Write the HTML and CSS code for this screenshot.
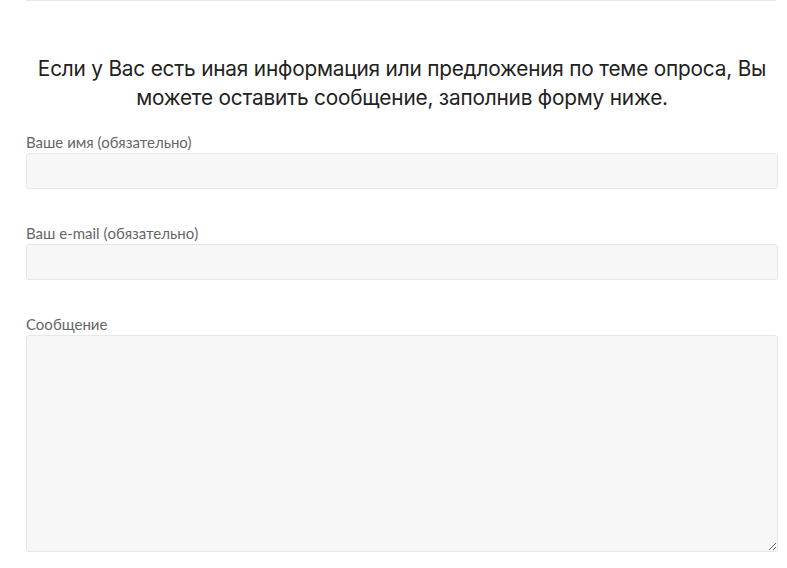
FILE: index.html
```html
<!DOCTYPE html>
<html lang="ru">
<head>
<meta charset="utf-8">
<link rel="stylesheet" href="styles.css">
</head>
<body>
<div class="page">
  <div class="rule"></div>
  <h2 class="intro">Если у Вас есть иная информация или предложения по теме опроса, Вы можете оставить сообщение, заполнив форму ниже.</h2>
  <form class="form">
    <label class="field">
      <span class="label">Ваше имя (обязательно)</span>
      <input class="input" type="text">
    </label>
    <label class="field">
      <span class="label">Ваш e-mail (обязательно)</span>
      <input class="input" type="text">
    </label>
    <label class="field">
      <span class="label">Сообщение</span>
      <textarea class="textarea"></textarea>
    </label>
  </form>
</div>
</body>
</html>
```
FILE: styles.css
```css
html, body {
  margin: 0;
  padding: 0;
  background: #fff;
}
.page {
  margin: 0 9px 0 26px;
  width: 752px;
}
.rule {
  height: 1px;
  background: #e6e6e6;
  width: 750px;
}
.intro {
  margin: 53px 0 0;
  font-family: Inter, "Noto Sans", sans-serif;
  font-weight: 400;
  font-size: 20.8px;
  line-height: 29px;
  color: #222;
  text-align: center;
  letter-spacing: -0.2px;
}
.form {
  display: flex;
  flex-direction: column;
  gap: 35px;
  margin-top: 21px;
}
.field {
  display: flex;
  flex-direction: column;
  gap: 2px;
}
.label {
  font-family: Lato, "Liberation Sans", sans-serif;
  font-size: 15px;
  line-height: 18px;
  color: #666;
}
.input, .textarea {
  box-sizing: border-box;
  width: 752px;
  margin: 0;
  background: #f7f7f7;
  border: 1px solid #e8e8e8;
  border-radius: 3px;
  font-family: Lato, sans-serif;
}
.input {
  height: 36px;
}
.textarea {
  height: 217px;
  resize: vertical;
}
```
